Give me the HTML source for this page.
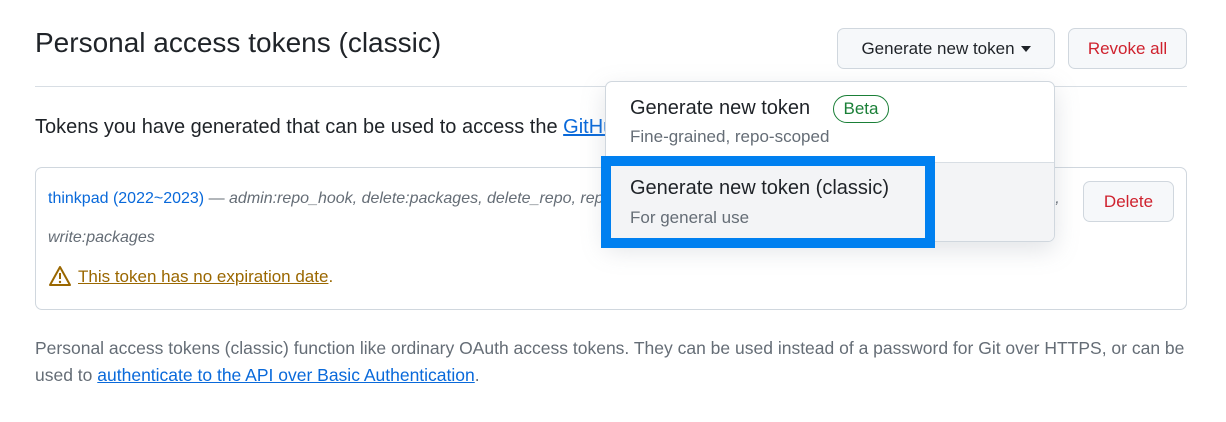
<!DOCTYPE html>
<html><head><style>
*{box-sizing:border-box;margin:0;padding:0}
body{width:1226px;height:422px;background:#fff;font-family:"Liberation Sans",sans-serif;color:#1f2328;position:relative;overflow:hidden}
.abs{position:absolute;white-space:nowrap}
.btn{position:absolute;border:1px solid #d0d7de;border-radius:7px;background:#f6f8fa;font-size:17px;display:flex;align-items:center;justify-content:center}
</style></head><body>
<div class="abs" style="left:35px;top:27px;font-size:28px;color:#1f2328">Personal access tokens (classic)</div>
<div class="btn" style="left:837px;top:28px;width:218px;height:41px">Generate new token <span style="display:inline-block;margin-left:6px;border-left:5px solid transparent;border-right:5px solid transparent;border-top:6px solid #1f2328"></span></div>
<div class="btn" style="left:1068px;top:28px;width:119px;height:41px;color:#cf222e">Revoke all</div>
<div class="abs" style="left:35px;top:86px;width:1152px;height:1px;background:#d8dee4"></div>
<div class="abs" style="left:35px;top:116px;font-size:20px">Tokens you have generated that can be used to access the <span style="color:#0969da;text-decoration:underline">GitHub API</span>.</div>
<div class="abs" style="left:35px;top:167px;width:1152px;height:143px;border:1px solid #d0d7de;border-radius:7px"></div>
<div class="abs" style="left:48px;top:190px;font-size:16px"><span style="color:#0969da">thinkpad (2022~2023)</span> <span style="color:#656d76">— <i>admin:repo_hook, delete:packages, delete_repo, repo, workflow, write:discussion, admin:org_hook, gist, notifications, user, x</i></span></div>
<div class="abs" style="left:1060px;top:180px;width:120px;height:45px;background:#fff"></div>
<div class="abs" style="left:48px;top:229px;font-size:16px;color:#656d76;font-style:italic">write:packages</div>
<svg class="abs" style="left:48px;top:265px" width="24" height="22" viewBox="0 0 24 22"><path d="M12 2 L22 20 H2 Z" fill="none" stroke="#9a6700" stroke-width="2" stroke-linejoin="round"/><path d="M12 8v6" stroke="#9a6700" stroke-width="2"/><circle cx="12" cy="17" r="1.2" fill="#9a6700"/></svg>
<div class="abs" style="left:78px;top:267px;font-size:17px;color:#9a6700"><span style="text-decoration:underline">This token has no expiration date</span>.</div>
<div class="btn" style="left:1083px;top:181px;width:91px;height:41px;color:#cf222e">Delete</div>
<div class="abs" style="left:35px;top:338px;font-size:17.5px;color:#656d76">Personal access tokens (classic) function like ordinary OAuth access tokens. They can be used instead of a password for Git over HTTPS, or can be</div>
<div class="abs" style="left:35px;top:365px;font-size:17.5px;color:#656d76">used to <span style="color:#0969da;text-decoration:underline">authenticate to the API over Basic Authentication</span>.</div>
<div class="abs" style="left:605px;top:81px;width:450px;height:161px;background:#fff;border:1px solid #d0d7de;border-radius:7px;box-shadow:0 8px 24px rgba(140,149,159,.25);overflow:hidden">
<div style="position:absolute;left:0;top:80px;width:100%;height:1px;background:#d8dee4"></div>
<div style="position:absolute;left:0;top:81px;width:100%;height:80px;background:#f3f4f6"></div>
</div>
<div class="abs" style="left:630px;top:97px;font-size:20px">Generate new token</div>
<div class="abs" style="left:833px;top:95px;width:56px;height:28px;border:1px solid #1a7f37;border-radius:14px;color:#1a7f37;font-size:17px;text-align:center;line-height:26px">Beta</div>
<div class="abs" style="left:630px;top:127px;font-size:17px;color:#656d76">Fine-grained, repo-scoped</div>
<div class="abs" style="left:601px;top:156px;width:334px;height:92px;border:10px solid #0080f0"></div>
<div class="abs" style="left:630px;top:177px;font-size:20px">Generate new token (classic)</div>
<div class="abs" style="left:630px;top:208px;font-size:17px;color:#656d76">For general use</div>
</body></html>
